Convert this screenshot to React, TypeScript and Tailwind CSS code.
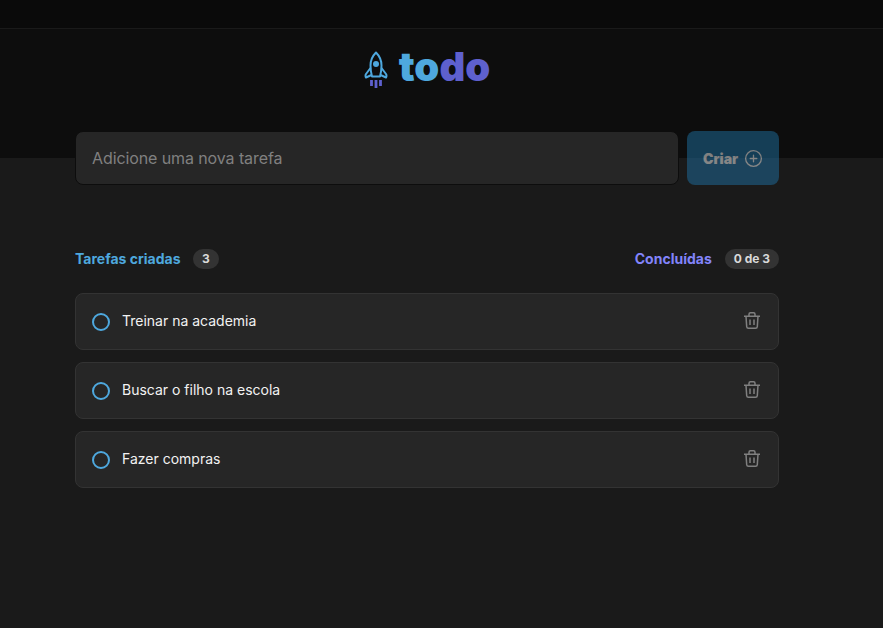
import { PiPlusCircle } from "react-icons/pi";

const tasks = ["Treinar na academia", "Buscar o filho na escola", "Fazer compras"];

function RocketLogo() {
  return (
    <svg width="24" height="37" viewBox="0 0 24 37" fill="none">
      <path d="M12 1.500C8 5.500 6.500 10 6.500 14.500C6.500 18 7 22 8 25.500H16C17 22 17.500 18 17.500 14.500C17.500 10 16 5.500 12 1.500Z" stroke="#4EA8DE" strokeWidth="2" strokeLinejoin="round" />
      <circle cx="12" cy="13" r="3" fill="#4EA8DE" />
      <path d="M6.500 17 2 23c-.5.800-.5 2.500 0 3.500L7.500 24M17.500 17l4.500 6c.5.800.5 2.500 0 3.500L16.500 24" stroke="#4EA8DE" strokeWidth="2" strokeLinejoin="round" />
      <path d="M7.500 29v6M12 29v8M16.500 29v6" stroke="#5E60CE" strokeWidth="2.800" />
    </svg>
  );
}

function TrashIcon() {
  return (
    <svg width="16" height="17" viewBox="0 0 16 17" fill="none" stroke="#808080" strokeWidth="1.500">
      <path d="M0 4.250h16" />
      <path d="M5 4V2.200C5 1.300 5.700.75 6.500.75h3c.8 0 1.500.55 1.500 1.450V4" />
      <path d="M2 4.250l.7 10.500c.1 1 .8 1.500 1.700 1.500h7.200c.9 0 1.600-.5 1.700-1.500L14 4.250" />
      <path d="M6 7.500v5.500M10 7.500v5.500" />
    </svg>
  );
}

function TaskRow({ title }: { title: string }) {
  return (
    <div className="flex h-[57px] items-center rounded-lg border border-[#333333] bg-[#262626] pl-4 pr-[18px]">
      <span className="h-[18px] w-[18px] rounded-full border-2 border-[#4EA8DE]" />
      <span className="ml-[12px] -mt-[1px] flex-1 text-sm leading-5 text-[#f2f2f2]">{title}</span>
      <span className="-mt-[2px]">
        <TrashIcon />
      </span>
    </div>
  );
}

export default function App() {
  return (
    <div className="min-h-[628px] bg-[#1a1a1a] font-['Inter',sans-serif]">
      <div className="h-[158px] bg-[#0d0d0d]">
        <div className="h-[29px] border-b border-[#1a1a1a] bg-[#0a0a0a]" />
        <div className="flex w-[854px] items-center justify-center gap-[11px] pt-[22px]">
          <RocketLogo />
          <h1 className="-mt-[6px] text-[40px] font-black leading-[36px]">
            <span className="text-[#4EA8DE]">to</span>
            <span className="text-[#5E60CE]">do</span>
          </h1>
        </div>
      </div>
      <div className="ml-[75px] w-[704px]">
        <div className="-mt-[27px] flex gap-2">
          <div className="flex h-[54px] flex-1 items-center rounded-lg border border-[#0d0d0d] bg-[#262626] pl-4 text-base tracking-[-0.1px] text-[#808080]">
            Adicione uma nova tarefa
          </div>
          <button className="flex h-[54px] w-[92px] items-center gap-[5px] rounded-lg bg-[#1E6F9F] pl-4 text-sm font-black text-[#f2f2f2] opacity-50">
            <span className="mt-px">Criar</span>
            <PiPlusCircle size={21} />
          </button>
        </div>
        <div className="mt-[64px] flex items-center justify-between">
          <div className="flex items-center gap-3">
            <span className="text-sm font-bold text-[#4EA8DE]">Tarefas criadas</span>
            <span className="rounded-full bg-[#333333] px-[9.500px] py-[2px] text-xs font-bold text-[#d9d9d9]">3</span>
          </div>
          <div className="flex items-center gap-[13px]">
            <span className="text-sm font-bold text-[#8284FA]">Concluídas</span>
            <span className="rounded-full bg-[#333333] px-[9px] py-[2px] text-xs font-bold text-[#d9d9d9]">0 de 3</span>
          </div>
        </div>
        <div className="mt-[24px] flex flex-col gap-3">
          {tasks.map((task) => (
            <TaskRow key={task} title={task} />
          ))}
        </div>
      </div>
    </div>
  );
}
